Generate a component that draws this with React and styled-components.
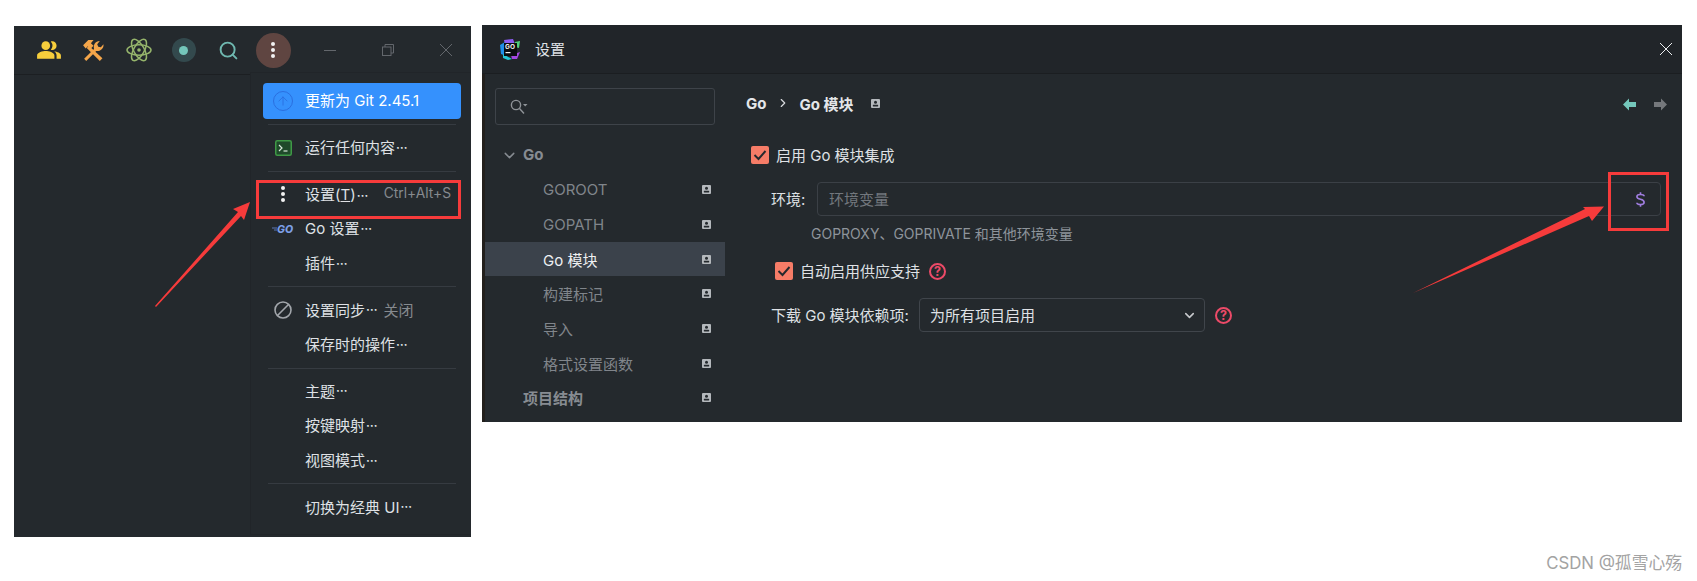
import styled, { createGlobalStyle } from 'styled-components'
import { ChevronDown, ChevronRight, Search, ArrowUp } from 'lucide-react'
import { MdPeopleAlt } from 'react-icons/md'

const GlobalStyle = createGlobalStyle`
  html, body {
    margin: 0;
    background: #fff;
  }
  * {
    box-sizing: border-box;
  }
`

const Page = styled.div`
  width: 1697px;
  height: 581px;
  padding: 25px 15px 0 14px;
  display: flex;
  flex-direction: column;
  overflow: hidden;
  font-family: 'Inter', 'Noto Sans CJK SC', sans-serif;
  font-size: 15px;
  color: #dfe1e5;
`

const Shots = styled.div`
  display: flex;
  align-items: flex-start;
  gap: 11px;
`

const Watermark = styled.div`
  align-self: flex-end;
  margin-top: 14px;
  font-size: 16.8px;
  line-height: 24px;
  color: #a3a3a3;
`

/* left shot: toolbar + popup menu */
const IdeWindow = styled.div`
  position: relative;
  flex: none;
  width: 457px;
  height: 511px;
  margin-top: 1px;
  background: #24292d;
`

const TitleBar = styled.div`
  height: 49px;
  padding-left: 12px;
  display: flex;
  align-items: center;
  background: #24292d;
  border-bottom: 1px solid #1c1f22;
`

const ToolSlot = styled.div`
  flex: none;
  width: 45px;
  height: 46px;
  display: flex;
  align-items: center;
  justify-content: center;
  color: ${(p) => p.$color || 'inherit'};
`

const WindowSlot = styled(ToolSlot)`
  width: 58px;
`

const WindowControls = styled.div`
  display: flex;
  margin-left: 5px;
`

const StatusDot = styled.div`
  width: 24px;
  height: 24px;
  border-radius: 50%;
  background: #33494d;
  display: flex;
  align-items: center;
  justify-content: center;
  &::after {
    content: '';
    width: 9px;
    height: 9px;
    border-radius: 50%;
    background: #74c7bb;
  }
`

const MoreButton = styled.div`
  width: 35px;
  height: 35px;
  margin-left: -1px;
  border-radius: 50%;
  background: #5f4541;
  display: flex;
  align-items: center;
  justify-content: center;
`

const Dots = styled.div`
  display: flex;
  flex-direction: column;
  gap: 2px;
  i {
    display: block;
    width: 4px;
    height: 4px;
    border-radius: 50%;
    background: #f2f2f2;
  }
`

const Menu = styled.div`
  position: absolute;
  left: 236px;
  right: 0;
  top: 46px;
  bottom: 2px;
  padding: 10px 10px 0 12px;
  background: #24292d;
  border-left: 1px solid #212529;
  border-top: 1px solid #212529;
  border-bottom: 1px solid #212529;
`

const MenuItem = styled.div`
  height: ${(p) => (p.$primary ? 35.7 : 34.7)}px;
  padding-bottom: 2px;
  display: flex;
  align-items: center;
  border-radius: 4px;
  white-space: nowrap;
  color: ${(p) => (p.$primary ? '#fff' : '#dfe1e5')};
  background: ${(p) => (p.$primary ? '#3591fd' : 'transparent')};
`

const MenuIcon = styled.div`
  flex: none;
  width: 42px;
  padding-right: 2px;
  margin-top: 2px;
  display: flex;
  align-items: center;
  justify-content: center;
`

const UpdateCircle = styled.div`
  width: 20px;
  height: 20px;
  border: 1.5px solid #2a6fe0;
  border-radius: 50%;
  color: #2a6fe0;
  display: flex;
  align-items: center;
  justify-content: center;
`

const Ellipsis = styled.span`
  font-size: 11.5px;
  font-weight: 700;
  margin-left: 1px;
`

const Hint = styled.span`
  color: #868a8f;
  margin-left: ${(p) => p.$gap || 0}px;
`

const Shortcut = styled.span`
  margin-left: auto;
  padding-right: 10px;
  color: #868a8f;
  font-size: 13.8px;
`

const Separator = styled.div`
  height: 1px;
  margin: 5.4px 5px;
  background: #363b41;
`

/* right shot: settings dialog */
const SettingsWindow = styled.div`
  position: relative;
  flex: none;
  width: 1200px;
  height: 397px;
  display: flex;
  flex-direction: column;
  background: #24292d;
`

const DialogHeader = styled.div`
  height: 49px;
  padding: 0 10px 0 18px;
  display: flex;
  align-items: center;
  gap: 14px;
  background: #212529;
  border-bottom: 1px solid #1b1e21;
`

const DialogTitle = styled.div`
  margin-bottom: 2px;
`

const CloseButton = styled.div`
  margin-left: auto;
  display: flex;
  color: #eceef0;
`

const DialogBody = styled.div`
  flex: 1;
  display: flex;
  min-height: 0;
`

const Sidebar = styled.div`
  flex: none;
  width: 243px;
  padding-top: 14px;
  border-left: 3px solid #221f1c;
`

const SearchBox = styled.div`
  width: 220px;
  height: 37px;
  margin-left: 10px;
  margin-bottom: 12.6px;
  padding-left: 14px;
  display: flex;
  align-items: center;
  border: 1.5px solid #3e4349;
  border-radius: 3px;
  color: #8f9398;
`

const TreeRow = styled.div`
  height: 34.7px;
  padding-left: ${(p) => (p.$child ? 58 : 38)}px;
  padding-right: 14px;
  display: flex;
  align-items: center;
  justify-content: space-between;
  position: relative;
  white-space: nowrap;
  font-weight: ${(p) => (p.$group ? 700 : 400)};
  color: ${(p) => (p.$active ? '#eef0f2' : p.$group ? '#878c92' : '#80858b')};
  background: ${(p) => (p.$active ? '#3b424b' : 'transparent')};
`

const TreeChevron = styled.div`
  position: absolute;
  left: 16px;
  top: 9px;
  display: flex;
  color: #868b91;
`

const Main = styled.div`
  flex: 1;
  min-width: 0;
  padding: 12px 15px 0 21px;
`

const Breadcrumb = styled.div`
  height: 34px;
  display: flex;
  align-items: center;
  font-weight: 700;
  color: #e4e6e9;
`

const CrumbArrow = styled.div`
  display: flex;
  margin: 0 9px 0 10px;
  color: #d8dadd;
`

const CrumbBadge = styled.div`
  display: flex;
  margin-left: 18px;
`

const NavArrows = styled.div`
  margin-left: auto;
  margin-top: 2px;
  display: flex;
  gap: 18px;
`

const CheckRow = styled.div`
  display: flex;
  align-items: center;
  gap: 7px;
  height: 18px;
  margin-top: ${(p) => p.$top}px;
  margin-left: ${(p) => p.$left}px;
  white-space: nowrap;
`

const CheckLabel = styled.span`
  margin-bottom: 2px;
`

const CheckBox = styled.div`
  flex: none;
  width: 18px;
  height: 18px;
  border-radius: 2px;
  background: #f67c67;
  display: flex;
  align-items: center;
  justify-content: center;
`

const FieldRow = styled.div`
  display: flex;
  align-items: center;
  height: 34px;
  margin-top: ${(p) => p.$top}px;
  margin-left: 25px;
`

const FieldLabel = styled.div`
  flex: none;
  width: ${(p) => p.$width}px;
  margin-bottom: 2px;
  white-space: nowrap;
`

const EnvInput = styled.div`
  flex: 1;
  height: 34px;
  margin-right: 6px;
  padding: 0 15px 0 11px;
  display: flex;
  align-items: center;
  justify-content: space-between;
  border: 1.5px solid #3b4046;
  border-radius: 4px;
  color: #72777d;
`

const FieldText = styled.span`
  margin-bottom: 2px;
`

const HintText = styled.div`
  margin: 9px 0 0 65px;
  height: 18px;
  line-height: 18px;
  font-size: 14px;
  color: #8e949b;
`

const Select = styled.div`
  flex: none;
  width: 286px;
  height: 34px;
  padding: 0 7px 0 10px;
  display: flex;
  align-items: center;
  justify-content: space-between;
  border: 1.5px solid #40454b;
  border-radius: 4px;
  color: #dfe1e5;
`

const HelpIcon = styled.div`
  flex: none;
  width: 17px;
  height: 17px;
  margin-left: ${(p) => p.$left || 0}px;
  border: 2px solid #ec4a68;
  border-radius: 50%;
  color: #ec4a68;
  font-size: 12.5px;
  font-weight: 700;
  line-height: 13px;
  text-align: center;
`

/* red marks somebody drew over the screenshots */
const RedFrame = styled.div`
  position: absolute;
  left: ${(p) => p.$x}px;
  top: ${(p) => p.$y}px;
  width: ${(p) => p.$w}px;
  height: ${(p) => p.$h}px;
  border: 3px solid #f63b3b;
`

const ArrowMark = styled.svg`
  position: absolute;
  left: ${(p) => p.$x}px;
  top: ${(p) => p.$y}px;
  overflow: visible;
`

function Badge() {
  return (
    <svg width="9" height="9" viewBox="0 0 9 9">
      <rect width="9" height="9" rx="1" fill="#b4b8bc" />
      <circle cx="4.5" cy="3.2" r="1.5" fill="#24292d" />
      <rect x="1.8" y="5.8" width="5.4" height="1.6" rx="0.6" fill="#24292d" />
    </svg>
  )
}

function ToolsMark() {
  return (
    <svg width="23" height="23" viewBox="0 0 22 22" fill="#f5a64a" style={{ marginLeft: -2 }}>
      <path d="M2 6 L7 1 H12 L9.5 4 L12 6.5 L9 9.5 L6.5 7 L4.5 9 Z" />
      <path d="M7.5 6.5 L20.5 18.5 L18 21 L5.5 8.5 Z" />
      <path d="M3 19 L12.5 9.5 C11.5 6 13.5 2 18 2 L15.5 5 L16.5 7.5 L19 8 L21.5 5 C22 9.5 18 12 14.5 11.5 L5 21 Z" />
    </svg>
  )
}

function AtomMark() {
  return (
    <svg width="26" height="26" viewBox="0 0 26 26" fill="none" stroke="#96b56c" strokeWidth="1.5">
      <ellipse cx="13" cy="13" rx="12" ry="5.2" />
      <ellipse cx="13" cy="13" rx="12" ry="5.2" transform="rotate(60 13 13)" />
      <ellipse cx="13" cy="13" rx="12" ry="5.2" transform="rotate(120 13 13)" />
      <circle cx="13" cy="13" r="1.8" fill="#96b56c" stroke="none" />
    </svg>
  )
}

function GoLandLogo() {
  return (
    <svg width="21" height="21" viewBox="0 0 21 21">
      <path d="M4 1 L13 0 L15 5 L5 6 Z" fill="#8b5cf0" />
      <path d="M15 3 L20 2 L19 9 L15 8 Z" fill="#4fd07a" />
      <path d="M0 6 L5 3 L6 17 L1 15 Z" fill="#1f8fe8" />
      <path d="M3 15 L12 20 L8 21 L3 19 Z" fill="#22c8d8" />
      <path d="M11 16 L20 13 L17 20 L12 20 Z" fill="#a347e0" />
      <rect x="4" y="4" width="13" height="13" fill="#0b0d10" />
      <text x="5" y="10" fontSize="6.5" fontWeight="700" fill="#f2f2f2" fontFamily="Inter, sans-serif">GO</text>
      <rect x="5.5" y="13" width="5" height="1.2" fill="#f2f2f2" />
    </svg>
  )
}

function GoMark() {
  return (
    <svg width="22" height="12" viewBox="0 0 22 12">
      <path d="M0 5 H5 M2 7 H5" stroke="#5d78b8" strokeWidth="1" />
      <text x="5" y="10" fontSize="10.5" fontWeight="800" fontStyle="italic" fill="#7c9fe6" fontFamily="Inter, sans-serif">GO</text>
    </svg>
  )
}

function TerminalMark() {
  return (
    <svg width="17" height="16" viewBox="0 0 17 16">
      <rect x="0.75" y="0.75" width="15.5" height="14.5" rx="1.5" fill="#1f4a2a" stroke="#3f9a46" strokeWidth="1.5" />
      <path d="M4 5 L7 8 L4 11" fill="none" stroke="#d8e8da" strokeWidth="1.2" />
      <path d="M8.5 11 H12.5" stroke="#d8e8da" strokeWidth="1.2" />
    </svg>
  )
}

function BlockedMark() {
  return (
    <svg width="18" height="18" viewBox="0 0 18 18" fill="none" stroke="#a2a6ab" strokeWidth="1.6">
      <circle cx="9" cy="9" r="8" />
      <path d="M3.5 14.5 L14.5 3.5" />
    </svg>
  )
}

function MinimizeMark() {
  return (
    <svg width="12" height="12" viewBox="0 0 12 12">
      <path d="M0 6.5 H12" stroke="#63676c" strokeWidth="1" />
    </svg>
  )
}

function RestoreMark() {
  return (
    <svg width="12" height="12" viewBox="0 0 12 12" fill="none" stroke="#63676c" strokeWidth="1">
      <rect x="0.5" y="3" width="8.5" height="8.5" />
      <path d="M3 3 V0.5 H11.5 V9 H9" />
    </svg>
  )
}

function CloseMark({ color = '#63676c' }) {
  return (
    <svg width="12" height="12" viewBox="0 0 12 12">
      <path d="M0 0 L12 12 M12 0 L0 12" stroke={color} strokeWidth="1" />
    </svg>
  )
}

function SearchWithCaret() {
  return (
    <svg width="18" height="16" viewBox="0 0 18 16" fill="none" stroke="#8f9398" strokeWidth="1.4">
      <circle cx="6" cy="6" r="4.6" />
      <path d="M9.5 9.5 L14 14.5" />
      <path d="M13 5 H17.5 L15.2 7.5 Z" fill="#8f9398" stroke="none" />
    </svg>
  )
}

function NavArrow({ color, flip }) {
  return (
    <svg width="13" height="13" viewBox="0 0 13 13" style={flip ? { transform: 'scaleX(-1)' } : undefined}>
      <path d="M0 6.5 L6 0.5 V4 H13 V9 H6 V12.5 Z" fill={color} />
    </svg>
  )
}

function CheckMark() {
  return (
    <svg width="14" height="12" viewBox="0 0 14 12" fill="none" stroke="#24292d" strokeWidth="1.9">
      <path d="M1.5 6 L5.5 10 L12.5 2" />
    </svg>
  )
}

function DollarMark() {
  return (
    <svg width="9" height="15" viewBox="0 0 10 16" fill="none" stroke="#a07ee0" strokeWidth="1.8">
      <path d="M9 4.3 C9 3 7.5 2.4 5 2.4 C2.5 2.4 1 3.2 1 4.9 C1 6.6 2.7 7.2 5 7.8 C7.4 8.4 9 9 9 11 C9 12.8 7.5 13.6 5 13.6 C2.5 13.6 1 12.9 1 11.6" />
      <path d="M5 0 V2.4 M5 13.6 V16" />
    </svg>
  )
}

function RedArrow({ x, y, width, height, points }) {
  return (
    <ArrowMark $x={x} $y={y} width={width} height={height} viewBox={`0 0 ${width} ${height}`}>
      <polygon points={points} fill="#f63b3b" />
    </ArrowMark>
  )
}

function ThreeDots() {
  return (
    <Dots>
      <i />
      <i />
      <i />
    </Dots>
  )
}

const treeItems = [
  { label: 'GOROOT', child: true },
  { label: 'GOPATH', child: true },
  { label: 'Go 模块', child: true, active: true },
  { label: '构建标记', child: true },
  { label: '导入', child: true },
  { label: '格式设置函数', child: true },
  { label: '项目结构', group: true },
]

export default function App() {
  return (
    <Page>
      <GlobalStyle />
      <Shots>
        <IdeWindow>
          <TitleBar>
            <ToolSlot $color="#f7ce3c"><MdPeopleAlt size={26} /></ToolSlot>
            <ToolSlot><ToolsMark /></ToolSlot>
            <ToolSlot><AtomMark /></ToolSlot>
            <ToolSlot><StatusDot /></ToolSlot>
            <ToolSlot $color="#6fb8b0"><Search size={21} strokeWidth={2.2} /></ToolSlot>
            <ToolSlot><MoreButton><ThreeDots /></MoreButton></ToolSlot>
            <WindowControls>
              <WindowSlot><MinimizeMark /></WindowSlot>
              <WindowSlot><RestoreMark /></WindowSlot>
              <WindowSlot><CloseMark /></WindowSlot>
            </WindowControls>
          </TitleBar>
          <Menu>
            <MenuItem $primary>
              <MenuIcon><UpdateCircle><ArrowUp size={14} strokeWidth={1.5} /></UpdateCircle></MenuIcon>
              更新为 Git 2.45.1
            </MenuItem>
            <Separator />
            <MenuItem>
              <MenuIcon><TerminalMark /></MenuIcon>
              运行任何内容<Ellipsis>⋯</Ellipsis>
            </MenuItem>
            <Separator />
            <MenuItem>
              <MenuIcon><ThreeDots /></MenuIcon>
              <span>设置(<u>T</u>)<Ellipsis>⋯</Ellipsis></span>
              <Shortcut>Ctrl+Alt+S</Shortcut>
            </MenuItem>
            <MenuItem>
              <MenuIcon><GoMark /></MenuIcon>
              Go 设置<Ellipsis>⋯</Ellipsis>
            </MenuItem>
            <MenuItem>
              <MenuIcon />
              插件<Ellipsis>⋯</Ellipsis>
            </MenuItem>
            <Separator />
            <MenuItem>
              <MenuIcon><BlockedMark /></MenuIcon>
              设置同步<Ellipsis>⋯</Ellipsis><Hint $gap={6}>关闭</Hint>
            </MenuItem>
            <MenuItem>
              <MenuIcon />
              保存时的操作<Ellipsis>⋯</Ellipsis>
            </MenuItem>
            <Separator />
            <MenuItem>
              <MenuIcon />
              主题<Ellipsis>⋯</Ellipsis>
            </MenuItem>
            <MenuItem>
              <MenuIcon />
              按键映射<Ellipsis>⋯</Ellipsis>
            </MenuItem>
            <MenuItem>
              <MenuIcon />
              视图模式<Ellipsis>⋯</Ellipsis>
            </MenuItem>
            <Separator />
            <MenuItem>
              <MenuIcon />
              切换为经典 UI<Ellipsis>⋯</Ellipsis>
            </MenuItem>
          </Menu>
          <RedFrame $x={242} $y={154} $w={205} $h={39} />
          <RedArrow x={141} y={176} width={96} height={105} points="0,104 83,10 78,7 95,0 89,18 86,14 1,105" />
        </IdeWindow>

        <SettingsWindow>
          <DialogHeader>
            <GoLandLogo />
            <DialogTitle>设置</DialogTitle>
            <CloseButton><CloseMark color="#eceef0" /></CloseButton>
          </DialogHeader>
          <DialogBody>
            <Sidebar>
              <SearchBox><SearchWithCaret /></SearchBox>
              <TreeRow $group>
                <TreeChevron><ChevronDown size={17} strokeWidth={2} /></TreeChevron>
                Go
              </TreeRow>
              {treeItems.map((item) => (
                <TreeRow key={item.label} $child={item.child} $group={item.group} $active={item.active}>
                  {item.label}
                  <Badge />
                </TreeRow>
              ))}
            </Sidebar>
            <Main>
              <Breadcrumb>
                Go
                <CrumbArrow><ChevronRight size={14} strokeWidth={2} /></CrumbArrow>
                Go 模块
                <CrumbBadge><Badge /></CrumbBadge>
                <NavArrows>
                  <NavArrow color="#74c7bb" />
                  <NavArrow color="#75787c" flip />
                </NavArrows>
              </Breadcrumb>
              <CheckRow $top={26} $left={5}>
                <CheckBox><CheckMark /></CheckBox>
                <CheckLabel>启用 Go 模块集成</CheckLabel>
              </CheckRow>
              <FieldRow $top={18}>
                <FieldLabel $width={46}>环境:</FieldLabel>
                <EnvInput>
                  <FieldText>环境变量</FieldText>
                  <DollarMark />
                </EnvInput>
              </FieldRow>
              <HintText>GOPROXY、GOPRIVATE 和其他环境变量</HintText>
              <CheckRow $top={19} $left={29}>
                <CheckBox><CheckMark /></CheckBox>
                <CheckLabel>自动启用供应支持</CheckLabel>
                <HelpIcon $left={2}>?</HelpIcon>
              </CheckRow>
              <FieldRow $top={18}>
                <FieldLabel $width={148}>下载 Go 模块依赖项:</FieldLabel>
                <Select>
                  <FieldText>为所有项目启用</FieldText>
                  <ChevronDown size={15} strokeWidth={2.5} color="#c8cacd" />
                </Select>
                <HelpIcon $left={10}>?</HelpIcon>
              </FieldRow>
            </Main>
          </DialogBody>
          <RedFrame $x={1126} $y={147} $w={61} $h={59} />
          <RedArrow x={931} y={181} width={192} height={88} points="0,87 172,3 170,1 191,0.5 179,15 176,10" />
        </SettingsWindow>
      </Shots>
      <Watermark>CSDN @孤雪心殇</Watermark>
    </Page>
  )
}
